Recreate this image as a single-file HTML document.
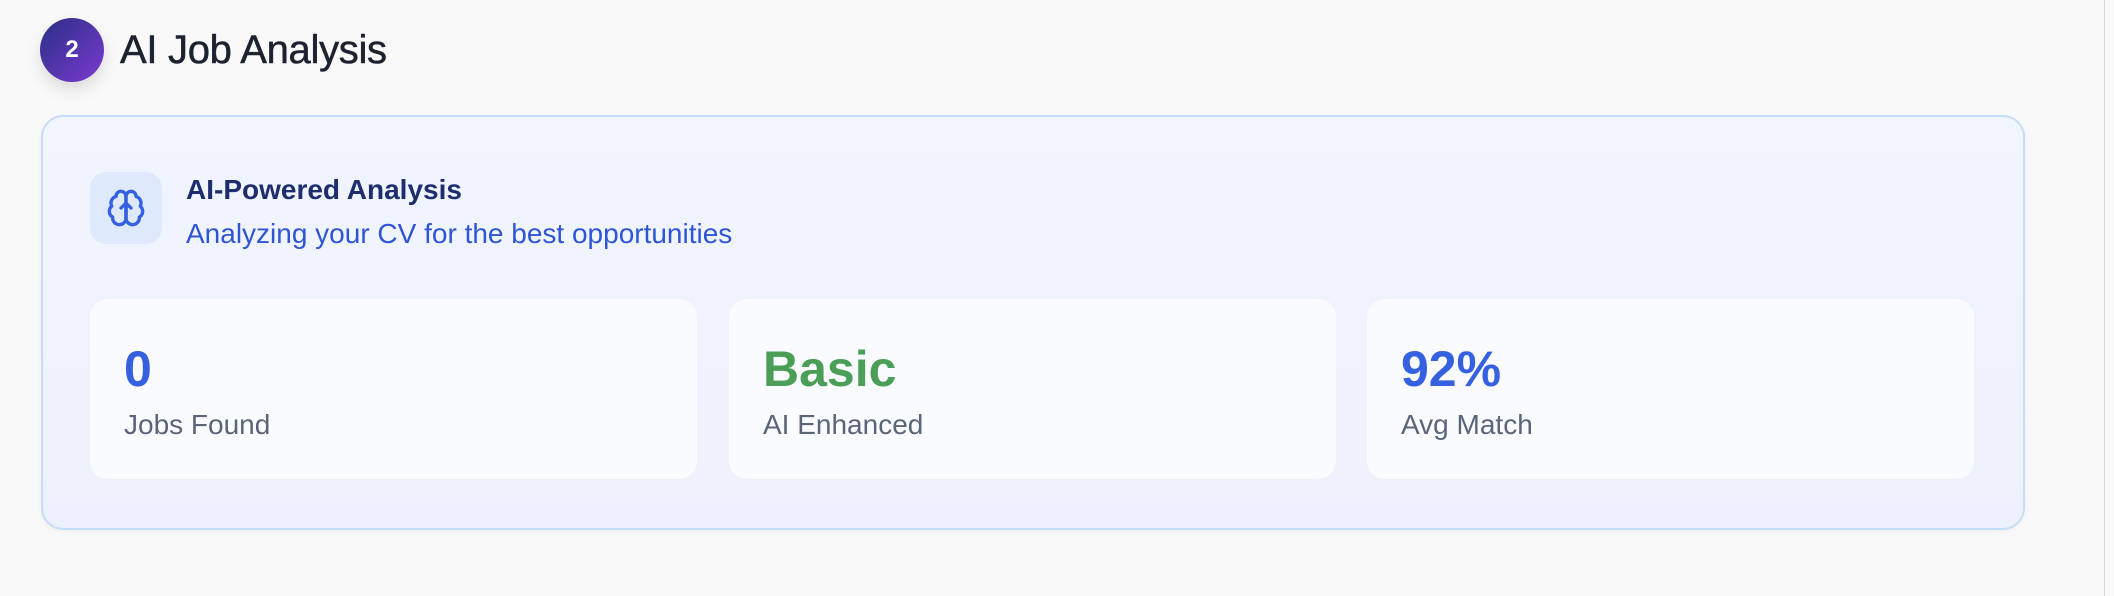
<!DOCTYPE html>
<html><head><style>
body{margin:0;width:2114px;height:596px;background:#f9f9f9;font-family:"Liberation Sans",sans-serif;position:relative;overflow:hidden}
.circ{position:absolute;left:40px;top:18px;width:64px;height:64px;border-radius:50%;background:linear-gradient(135deg,#2a2f86,#7b3bd0);box-shadow:0 8px 16px rgba(0,0,0,.12);color:#fff;font-weight:bold;font-size:24px;display:flex;align-items:center;justify-content:center}
.title{position:absolute;left:120px;top:28px;font-size:40px;color:#1d2230;letter-spacing:-.3px;-webkit-text-stroke:.5px #1d2230}
.card{position:absolute;left:41px;top:115px;width:1984px;height:415px;box-sizing:border-box;border:2px solid #c6dcf8;border-radius:22px;background:linear-gradient(180deg,#f0f5fe,#edf1fd);box-shadow:0 2px 6px rgba(0,0,0,.04)}
.ib{position:absolute;left:90px;top:172px;width:72px;height:72px;border-radius:16px;background:#dee9fb;display:flex;align-items:center;justify-content:center}
.h{position:absolute;left:186px;top:174px;font-size:28px;font-weight:bold;color:#1e2d6e}
.s{position:absolute;left:186px;top:218px;font-size:28px;color:#2f55d4}
.st{position:absolute;top:299px;width:607px;height:180px;border-radius:18px;background:#f9fbff}
.n{position:absolute;left:34px;top:41px;font-size:50px;font-weight:bold;color:#3561e0}
.l{position:absolute;left:34px;top:110px;font-size:28px;color:#5b6478}
.sb{position:absolute;left:2104px;top:0;width:1px;height:596px;background:#d8d8d8}
</style></head><body>
<div class="circ">2</div>
<div class="title">AI Job Analysis</div>
<div class="card"></div>
<div class="ib"><svg width="40" height="40" viewBox="0 0 24 24" fill="none" stroke="#3561e0" stroke-width="2" stroke-linecap="round" stroke-linejoin="round"><path d="M12 5a3 3 0 1 0-5.997.125 4 4 0 0 0-2.526 5.77 4 4 0 0 0 .556 6.588A4 4 0 1 0 12 18Z"/><path d="M12 5a3 3 0 1 1 5.997.125 4 4 0 0 1 2.526 5.77 4 4 0 0 1-.556 6.588A4 4 0 1 1 12 18Z"/><path d="M12 18V9M9 12l3-3 3 3"/></svg></div>
<div class="h">AI-Powered Analysis</div>
<div class="s">Analyzing your CV for the best opportunities</div>
<div class="st" style="left:90px"><div class="n">0</div><div class="l">Jobs Found</div></div>
<div class="st" style="left:729px"><div class="n" style="color:#4a9e58">Basic</div><div class="l">AI Enhanced</div></div>
<div class="st" style="left:1367px"><div class="n">92%</div><div class="l">Avg Match</div></div>
<div class="sb"></div>
</body></html>
